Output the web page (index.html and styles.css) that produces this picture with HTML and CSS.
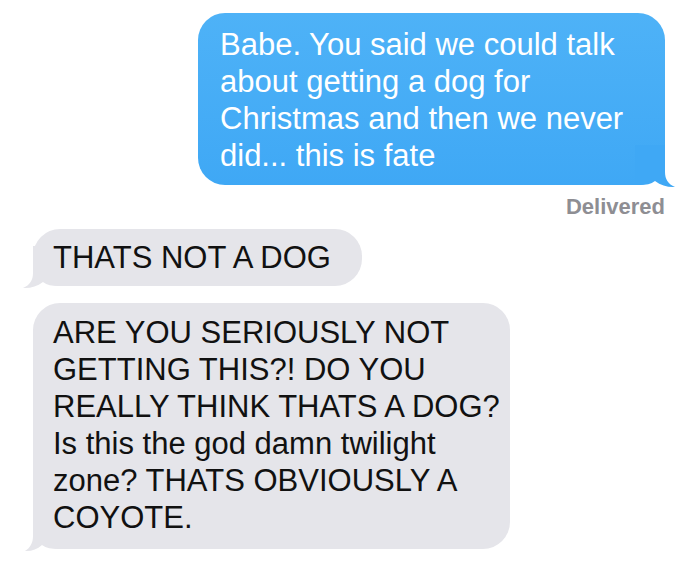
FILE: index.html
```html
<!DOCTYPE html>
<html>
<head>
<meta charset="utf-8">
<link rel="stylesheet" href="styles.css">
</head>
<body>
<div class="thread">
  <div class="row row-out">
    <div class="bubble bubble-out">
      <span class="text">Babe. You said we could talk<br>about getting a dog for<br>Christmas and then we never<br>did... this is fate</span>
      <svg class="tail tail-out" width="42" height="43" viewBox="0 0 42 43"><path d="M30,0 L30,27 C30,34 33,39 40,42 C33,42.5 26,40.5 20,36 C16,39 11,40 5,40 L0,40 L0,0 Z"/></svg>
    </div>
  </div>
  <div class="status">Delivered</div>
  <div class="row row-in">
    <div class="bubble bubble-in bubble-short">
      <span class="text">THATS NOT A DOG</span>
      <svg class="tail tail-in" width="42" height="43" viewBox="0 0 42 43"><path d="M12,0 L12,27 C12,34 9,39 2,42 C9,42.5 16,40.5 22,36 C26,39 31,40 37,40 L42,40 L42,0 Z"/></svg>
    </div>
  </div>
  <div class="row row-in">
    <div class="bubble bubble-in bubble-long">
      <span class="text">ARE YOU SERIOUSLY NOT<br>GETTING THIS?! DO YOU<br>REALLY THINK THATS A DOG?<br>Is this the god damn twilight<br>zone? THATS OBVIOUSLY A<br>COYOTE.</span>
      <svg class="tail tail-in" width="42" height="43" viewBox="0 0 42 43"><path d="M12,0 L12,27 C12,34 9,39 4,42 C10,42.5 16,40.5 21,36 C25,39 31,40 37,40 L42,40 L42,0 Z"/></svg>
    </div>
  </div>
</div>
</body>
</html>
```
FILE: styles.css
```css
html, body {
  margin: 0;
  padding: 0;
  background: #ffffff;
}

.thread {
  width: 700px;
  height: 582px;
  padding-top: 13px;
  box-sizing: border-box;
  display: flex;
  flex-direction: column;
  font-family: "Liberation Sans", Arial, sans-serif;
}

.row {
  display: flex;
}

.row-out {
  justify-content: flex-end;
  padding-right: 35px;
}

.row-in {
  justify-content: flex-start;
  padding-left: 33px;
}

.bubble {
  position: relative;
  box-sizing: border-box;
  border-radius: 27px;
  font-size: 31px;
  line-height: 37px;
  white-space: nowrap;
}

.text {
  position: relative;
  z-index: 1;
}

.bubble-out {
  width: 467px;
  padding: 13px 20px 11px 22px;
  color: #ffffff;
  background: linear-gradient(180deg, #4eb2f7 0%, #3fa8f5 100%);
}

.bubble-out .tail {
  fill: #3fa8f5;
}

.bubble-in {
  color: #111111;
  background: #e5e5ea;
}

.bubble-in .tail {
  fill: #e5e5ea;
}

.bubble-short {
  width: 329px;
  margin-top: 10px;
  padding: 10px 20px 10px 20px;
}

.bubble-long {
  width: 477px;
  margin-top: 17px;
  padding: 11px 20px 13px 20px;
}

.tail {
  position: absolute;
  bottom: -3px;
}

.tail-out {
  right: -12px;
}

.tail-in {
  left: -12px;
}

.status {
  align-self: flex-end;
  margin-right: 35px;
  margin-top: 10px;
  font-size: 22px;
  line-height: 24px;
  font-weight: 700;
  color: #8e8e93;
}
```
